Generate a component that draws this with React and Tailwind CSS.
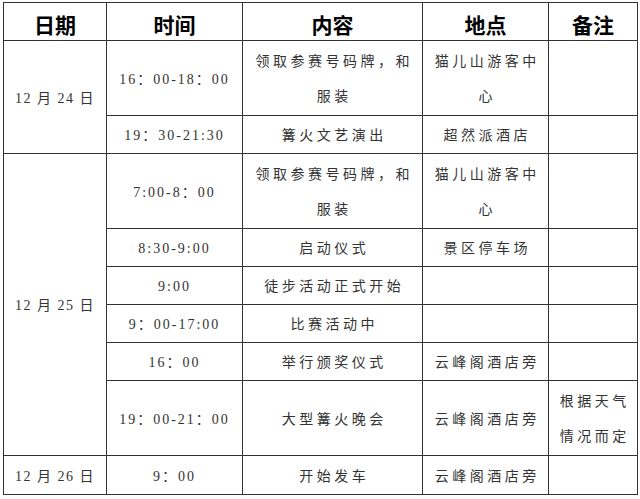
import React from 'react';

const FONT = { fontFamily: '"Liberation Serif", "Noto Sans CJK SC", serif' };

// time / content / place / note per row; h = row height in px
const ROWS = [
  { date: '12 月 24 日', span: 2, time: '16：00-18：00', what: ['领取参赛号码牌，和', '服装'], where: ['猫儿山游客中', '心'], h: 75 },
  { time: '19：30-21:30', what: ['篝火文艺演出'], where: ['超然派酒店'], h: 38 },
  { date: '12 月 25 日', span: 6, time: '7:00-8：00', what: ['领取参赛号码牌，和', '服装'], where: ['猫儿山游客中', '心'], h: 75 },
  { time: '8:30-9:00', what: ['启动仪式'], where: ['景区停车场'], h: 38 },
  { time: '9:00', what: ['徒步活动正式开始'], where: [], h: 38 },
  { time: '9：00-17:00', what: ['比赛活动中'], where: [], h: 38 },
  { time: '16：00', what: ['举行颁奖仪式'], where: ['云峰阁酒店旁'], h: 37 },
  { time: '19：00-21：00', what: ['大型篝火晚会'], where: ['云峰阁酒店旁'], note: ['根据天气', '情况而定'], h: 75 },
  { date: '12 月 26 日', span: 1, time: '9：00', what: ['开始发车'], where: ['云峰阁酒店旁'], h: 39 },
];

const Lines = ({ items = [] }) => items.map((t, i) => (
  <div key={i} className="tracking-[3.5px] pl-[3.5px]">{t}</div>
));

export default function App() {
  const cell = 'border border-[#333] text-center align-middle p-0 pt-[2px]';
  return (
    <div className="w-[640px] h-[499px] bg-white pt-[2px] pl-[3px]" style={FONT}>
      <table className="table-fixed border-collapse w-[634px] text-[14px] leading-[35px] text-[#333]">
        <colgroup>
          <col className="w-[103px]" />
          <col className="w-[136px]" />
          <col className="w-[180px]" />
          <col className="w-[126px]" />
          <col className="w-[89px]" />
        </colgroup>
        <thead>
          <tr>
            {['日期', '时间', '内容', '地点', '备注'].map(h => (
              <th key={h} className="border border-[#333] h-[38px] p-0 pt-[4px] text-[21px] leading-[30px] font-bold text-black" style={{ fontFamily: '"Noto Sans CJK SC", sans-serif' }}>
                {h}
              </th>
            ))}
          </tr>
        </thead>
        <tbody>
          {ROWS.map((r, i) => (
            <tr key={i} style={{ height: r.h }}>
              {r.date && (
                <td rowSpan={r.span} className={`${cell} tracking-[1.5px]`}>{r.date}</td>
              )}
              <td className={`${cell} tracking-[2px]`}>{r.time}</td>
              <td className={cell}><Lines items={r.what} /></td>
              <td className={cell}><Lines items={r.where} /></td>
              <td className={cell}><Lines items={r.note} /></td>
            </tr>
          ))}
        </tbody>
      </table>
    </div>
  );
}
